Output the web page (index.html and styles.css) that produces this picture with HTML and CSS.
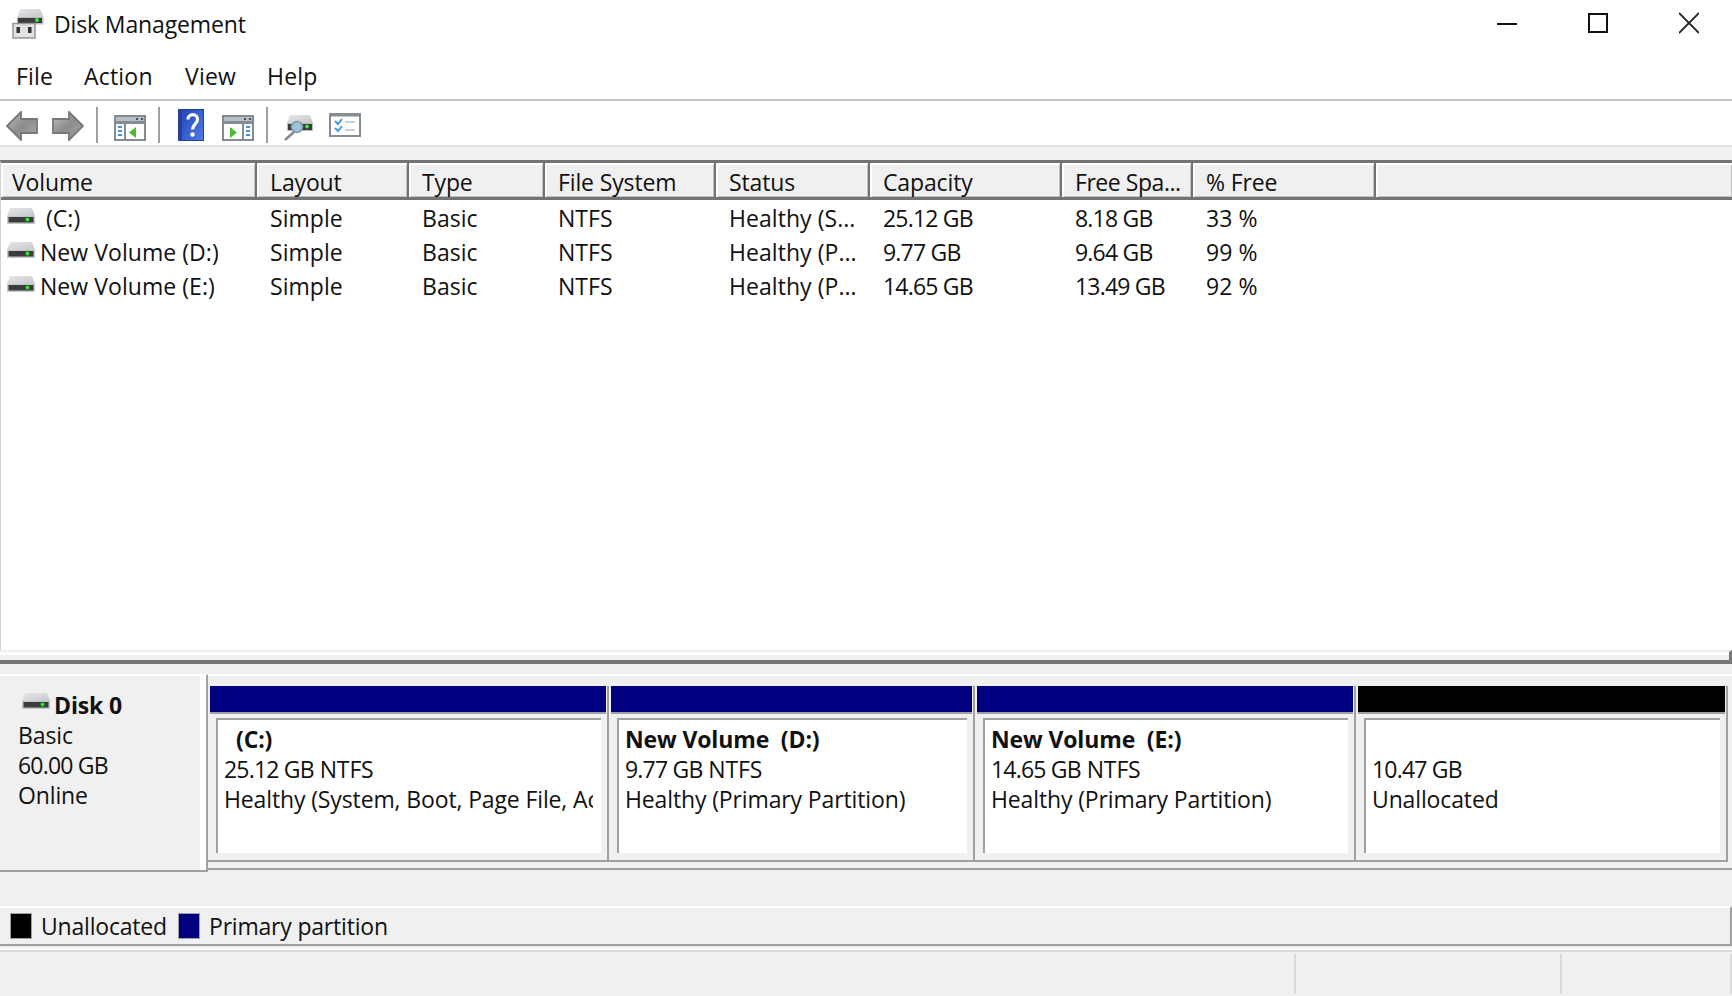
FILE: index.html
```html
<!DOCTYPE html>
<html lang="en">
<head>
    <meta charset="UTF-8">
    <meta name="viewport" content="width=device-width, initial-scale=1.0">
    <title>Disk Management</title>
    <link rel="stylesheet" href="styles.css">
</head>
<body>
    <!-- Shared drive icon -->
    <svg class="defs" width="0" height="0">
        <defs>
            <linearGradient id="lid" x1="0" y1="0" x2="1" y2="1">
                <stop offset="0" stop-color="#e6e7e9"/>
                <stop offset="1" stop-color="#c4c7cb"/>
            </linearGradient>
            <linearGradient id="arrow" x1="0" y1="0" x2="1" y2="1">
                <stop offset="0" stop-color="#c2c2c2"/>
                <stop offset="0.500" stop-color="#8c8c8c"/>
                <stop offset="1" stop-color="#a8a8a8"/>
            </linearGradient>
            <linearGradient id="book" x1="0" y1="0" x2="1" y2="1">
                <stop offset="0" stop-color="#2447be"/>
                <stop offset="1" stop-color="#4f7ae4"/>
            </linearGradient>
            <symbol id="drive" viewBox="0 0 28 16">
                <path d="M3 0h22l3 8H0z" fill="url(#lid)"/>
                <path d="M0 8h28v8H0z" fill="#c4c7ca"/>
                <path d="M1.500 9h25v5.500h-25z" fill="#3a3c3b"/>
                <circle cx="20.500" cy="11.500" r="2.800" fill="#1c6b22"/>
                <circle cx="20.500" cy="11.500" r="1.700" fill="#3fe83f"/>
            </symbol>
        </defs>
    </svg>

    <div class="window">
        <!-- Title bar -->
        <div class="title-bar">
            <svg class="app-icon" width="33" height="32" viewBox="0 0 33 32">
                <path d="M9 1h20l3.500 8h-26z" fill="url(#lid)"/>
                <path d="M6 9h26.500v7.500H6z" fill="#b9bcc0"/>
                <path d="M7 10h24v5H7z" fill="#3a3c3b"/>
                <circle cx="26" cy="12" r="2" fill="#3fe83f"/>
                <path d="M2 15.500h22V30H2z" fill="#e2e2e2" stroke="#959595" stroke-width="1.500"/>
                <path d="M5.500 19h3.500v6H5.500zM17 19h3.500v6H17z" fill="#333"/>
            </svg>
            <span class="title">Disk Management</span>
            <div class="controls">
                <svg width="20" height="22" viewBox="0 0 20 22"><path d="M0 12h20" stroke="#111" stroke-width="2"/></svg>
                <svg width="20" height="22" viewBox="0 0 20 22"><path d="M1 2h18v18H1z" fill="none" stroke="#111" stroke-width="2"/></svg>
                <svg width="20" height="22" viewBox="0 0 20 22"><path d="M0 1l20 20M20 1L0 21" stroke="#222" stroke-width="1.800"/></svg>
            </div>
        </div>

        <!-- Menu -->
        <div class="menu">
            <span class="m-file">File</span>
            <span class="m-action">Action</span>
            <span class="m-view">View</span>
            <span class="m-help">Help</span>
        </div>

        <!-- Toolbar -->
        <div class="toolbar">
            <svg class="ic-back" width="32" height="30" viewBox="0 0 32 30"><path d="M1 15L15 1v7h16v14H15v7z" fill="url(#arrow)" stroke="#777" stroke-width="1.800"/></svg>
            <svg class="ic-next" width="32" height="30" viewBox="0 0 32 30"><path d="M31 15L17 1v7H1v14h16v7z" fill="url(#arrow)" stroke="#777" stroke-width="1.800"/></svg>
            <i class="sep sep-1"></i>
            <svg class="ic-tree" width="32" height="26" viewBox="0 0 32 26">
                <path d="M1 1h30v24H1z" fill="#fff" stroke="#848b93" stroke-width="2"/>
                <path d="M2 2h28v4H2z" fill="#b8bec5"/><path d="M2 6h28v3H2z" fill="#858c95"/>
                <path d="M22 3h2v2h-2zM27 3h2v2h-2z" fill="#45505c"/>
                <path d="M11 9v16" stroke="#848b93" stroke-width="2"/>
                <path d="M4 12h4M4 16h4M4 20h4" stroke="#4b8fd0" stroke-width="2"/>
                <path d="M22 12v11l-7-5.500z" fill="#4dbb2b"/>
            </svg>
            <i class="sep sep-2"></i>
            <svg class="ic-help" width="26" height="32" viewBox="0 0 26 32">
                <path d="M0 0h26v32H0z" fill="#24409c"/><path d="M4 1h21v30H4z" fill="url(#book)"/>
                <path d="M10 10.500c0-6.500 9.500-6.500 9.500 0 0 4.500-5 5-5 10" fill="none" stroke="#fff" stroke-width="3.200"/>
                <circle cx="14.500" cy="25.500" r="2.200" fill="#fff"/>
            </svg>
            <svg class="ic-pane" width="32" height="26" viewBox="0 0 32 26">
                <path d="M1 1h30v24H1z" fill="#fff" stroke="#848b93" stroke-width="2"/>
                <path d="M2 2h28v4H2z" fill="#b8bec5"/><path d="M2 6h28v3H2z" fill="#858c95"/>
                <path d="M22 3h2v2h-2zM27 3h2v2h-2z" fill="#45505c"/>
                <path d="M21 9v16" stroke="#848b93" stroke-width="2"/>
                <path d="M24 12h4M24 16h4M24 20h4" stroke="#4b8fd0" stroke-width="2"/>
                <path d="M8 12v11l7-5.500z" fill="#4dbb2b"/>
            </svg>
            <i class="sep sep-3"></i>
            <svg class="ic-scan" width="30" height="26" viewBox="0 0 30 26">
                <path d="M6 0h20l3 8H3z" fill="url(#lid)"/>
                <path d="M3 8h26v8H3z" fill="#b9bcc0"/>
                <path d="M4 9h24v6H4z" fill="#3a3c3b"/>
                <circle cx="23" cy="11.500" r="2" fill="#3fe83f"/>
                <path d="M10 17l-9 8" stroke="#7d8894" stroke-width="2.500"/>
                <circle cx="13" cy="12" r="5.500" fill="#9cc3da" stroke="#7f98aa" stroke-width="1.500"/>
            </svg>
            <svg class="ic-list" width="32" height="24" viewBox="0 0 32 24">
                <path d="M1 1h30v22H1z" fill="#fff" stroke="#848b93" stroke-width="2"/>
                <path d="M1 2h30" stroke="#848b93" stroke-width="3"/>
                <path d="M6 8l3 3 4-5M6 15l3 3 4-5" fill="none" stroke="#3f9be8" stroke-width="2"/>
                <path d="M16 9h10M16 17h10" stroke="#cfcfcf" stroke-width="2"/>
            </svg>
        </div>

        <!-- Volume list -->
        <div class="volumes">
            <div class="row head">
                <span>Volume</span><span>Layout</span><span>Type</span><span>File System</span><span>Status</span><span>Capacity</span><span class="tight">Free Spa...</span><span>% Free</span><span></span>
            </div>
            <div class="row">
                <span class="name drive-c"><svg width="28" height="16"><use href="#drive"/></svg>(C:)</span><span>Simple</span><span>Basic</span><span>NTFS</span><span>Healthy (S...</span><span class="size">25.12 GB</span><span class="size">8.18 GB</span><span>33 %</span>
            </div>
            <div class="row">
                <span class="name"><svg width="28" height="16"><use href="#drive"/></svg>New Volume (D:)</span><span>Simple</span><span>Basic</span><span>NTFS</span><span>Healthy (P...</span><span class="size">9.77 GB</span><span class="size">9.64 GB</span><span>99 %</span>
            </div>
            <div class="row">
                <span class="name"><svg width="28" height="16"><use href="#drive"/></svg>New Volume (E:)</span><span>Simple</span><span>Basic</span><span>NTFS</span><span>Healthy (P...</span><span class="size">14.65 GB</span><span class="size">13.49 GB</span><span>92 %</span>
            </div>
        </div>
        <div class="splitter"></div>

        <!-- Disk map -->
        <div class="disk">
            <div class="disk-info">
                <div class="disk-name"><svg width="28" height="16"><use href="#drive"/></svg><b>Disk 0</b></div>
                <div>Basic</div>
                <div class="size">60.00 GB</div>
                <div>Online</div>
            </div>
            <div class="parts">
                <div class="part">
                    <div class="bar"></div>
                    <div class="body"><div class="text"><b class="c-label">(C:)</b><br><span class="size">25.12 GB</span> NTFS<br>Healthy (System, Boot, Page File, Active)</div></div>
                </div>
                <div class="part">
                    <div class="bar"></div>
                    <div class="body"><div class="text"><b>New Volume&nbsp; (D:)</b><br><span class="size">9.77 GB</span> NTFS<br>Healthy (Primary Partition)</div></div>
                </div>
                <div class="part">
                    <div class="bar"></div>
                    <div class="body"><div class="text"><b>New Volume&nbsp; (E:)</b><br><span class="size">14.65 GB</span> NTFS<br>Healthy (Primary Partition)</div></div>
                </div>
                <div class="part">
                    <div class="bar free"></div>
                    <div class="body"><div class="text"><br><span class="size">10.47 GB</span><br>Unallocated</div></div>
                </div>
            </div>
        </div>

        <!-- Legend -->
        <div class="legend">
            <i class="swatch free"></i><span class="lg-free">Unallocated</span>
            <i class="swatch"></i><span>Primary partition</span>
        </div>

        <!-- Status bar -->
        <div class="status"><span></span><span></span><span></span></div>
    </div>
</body>
</html>
```
FILE: styles.css
```css
* {
    box-sizing: border-box;
}
body {
    margin: 0;
    width: 1732px;
    height: 996px;
    overflow: hidden;
    background: #f0f0f0;
    color: #111;
    font-family: "Open Sans", "Noto Sans", sans-serif;
    font-size: 23px;
    letter-spacing: -0.13px;
    white-space: nowrap;
}
svg {
    display: block;
    flex: none;
}
.defs {
    position: absolute;
}
.window {
    display: flex;
    flex-direction: column;
    height: 996px;
}
.title-bar {
    display: flex;
    height: 48px;
    padding: 8px 33px 0 11px;
    background: #fff;
}
.title {
    margin-left: 10px;
    line-height: 33px;
}
.controls {
    display: flex;
    gap: 71px;
    margin: 4px 0 0 auto;
}
.menu {
    display: flex;
    height: 53px;
    padding-left: 16px;
    line-height: 57px;
    letter-spacing: 0.2px;
    background: #fff;
    border-bottom: 2px solid #c3c3c3;
}
.m-file {
    width: 68px;
}
.m-action {
    width: 101px;
}
.m-view {
    width: 82px;
}
.toolbar {
    display: flex;
    align-items: flex-start;
    height: 46px;
    padding: 6px 0 0 6px;
    background: #fff;
    border-bottom: 2px solid #e2e2e2;
}
.ic-back, .ic-next {
    margin-top: 4px;
}
.ic-next {
    margin-left: 14px;
}
.sep {
    width: 2px;
    height: 36px;
    background: #a0a0a0;
}
.sep-1 {
    margin: 0 16px 0 12px;
}
.ic-tree, .ic-pane {
    margin-top: 8px;
}
.sep-2 {
    margin: 0 18px 0 12px;
}
.ic-help {
    margin-top: 2px;
}
.ic-pane {
    margin-left: 18px;
}
.sep-3 {
    margin: 0 16px 0 12px;
}
.ic-scan {
    margin-top: 8px;
}
.ic-list {
    margin: 6px 0 0 15px;
}
.volumes {
    height: 491px;
    margin-top: 13px;
    background: #fff;
    border-top: 3px solid #737373;
    border-left: 1px solid #d0d0d0;
}
.row {
    display: grid;
    grid-template-columns: 256px 152px 136px 171px 154px 192px 131px 183px 1fr;
    height: 34px;
    line-height: 34px;
    letter-spacing: 0.05px;
}
.row span {
    padding-left: 13px;
    overflow: hidden;
}
.size {
    letter-spacing: -0.8px;
}
.row .name {
    display: flex;
    align-items: center;
    gap: 5px;
    padding-left: 6px;
}
.row .name svg {
    margin-top: -3px;
}
.row .drive-c {
    gap: 11px;
}
.head {
    height: 37px;
    margin-bottom: 1px;
    background: #f0f0f0;
    border-bottom: 3px solid #737373;
    letter-spacing: -0.13px;
}
.head span {
    border-right: 2px solid #737373;
    box-shadow: inset 2px 2px #fff, inset -1px -1px #c0c0c0;
    line-height: 38px;
}
.head span:last-child {
    border-right: 0;
}
.head span:first-child {
    padding-left: 11px;
}
.head .tight {
    letter-spacing: -0.45px;
}
.splitter {
    height: 14px;
    border-top: 2px solid #eee;
    border-right: 3px solid #777;
    border-bottom: 4px solid #777;
    box-shadow: inset 0 3px #fff;
}
.disk {
    display: flex;
    height: 208px;
    padding-top: 10px;
    line-height: 30px;
}
.disk-info {
    width: 208px;
    height: 198px;
    padding: 14px 0 0 18px;
    border-top: 2px solid #fff;
    border-right: 2px solid #a0a0a0;
    border-bottom: 2px solid #a0a0a0;
    box-shadow: inset -6px 0 #fff;
}
.disk-name {
    display: flex;
    gap: 4px;
    padding-left: 4px;
}
.disk-name svg {
    margin-top: 3px;
}
.parts {
    display: grid;
    grid-template-columns: 401px 366px 381px 372px;
    flex: 1;
    height: 196px;
    padding-top: 10px;
    border-top: 2px solid #fff;
    border-bottom: 2px solid #a0a0a0;
}
.part {
    height: 176px;
    border-right: 2px solid #a0a0a0;
    border-bottom: 2px solid #a0a0a0;
}
.bar {
    height: 28px;
    margin: 0 1px 0 2px;
    background: #000080;
    border-bottom: 2px solid #a0a0a0;
}
.free {
    background: #000;
}
.body {
    height: 135px;
    margin: 4px 6px 0 8px;
    padding: 4px 8px 0 6px;
    background: #fff;
    border-top: 2px solid #a0a0a0;
    border-left: 2px solid #a0a0a0;
}
.text {
    overflow: hidden;
}
.c-label {
    margin-left: 12px;
}
.legend {
    display: flex;
    align-items: center;
    height: 40px;
    margin-top: 34px;
    padding-left: 10px;
    border-top: 2px solid #fff;
    border-right: 2px solid #a0a0a0;
    border-bottom: 2px solid #a0a0a0;
    letter-spacing: -0.2px;
    line-height: 32px;
}
.swatch {
    width: 22px;
    height: 26px;
    margin-right: 9px;
    background: #000080;
    border: 1px solid #a0a0a0;
}
.swatch.free {
    background: #000;
}
.lg-free {
    width: 137px;
}
.status {
    display: grid;
    grid-template-columns: 1296px 266px 1fr;
    height: 46px;
    margin-top: 4px;
    padding-top: 2px;
    border-top: 2px solid #dadada;
    box-shadow: 0 -2px #fff;
}
.status span {
    height: 40px;
    border-right: 2px solid #dadada;
}
```
